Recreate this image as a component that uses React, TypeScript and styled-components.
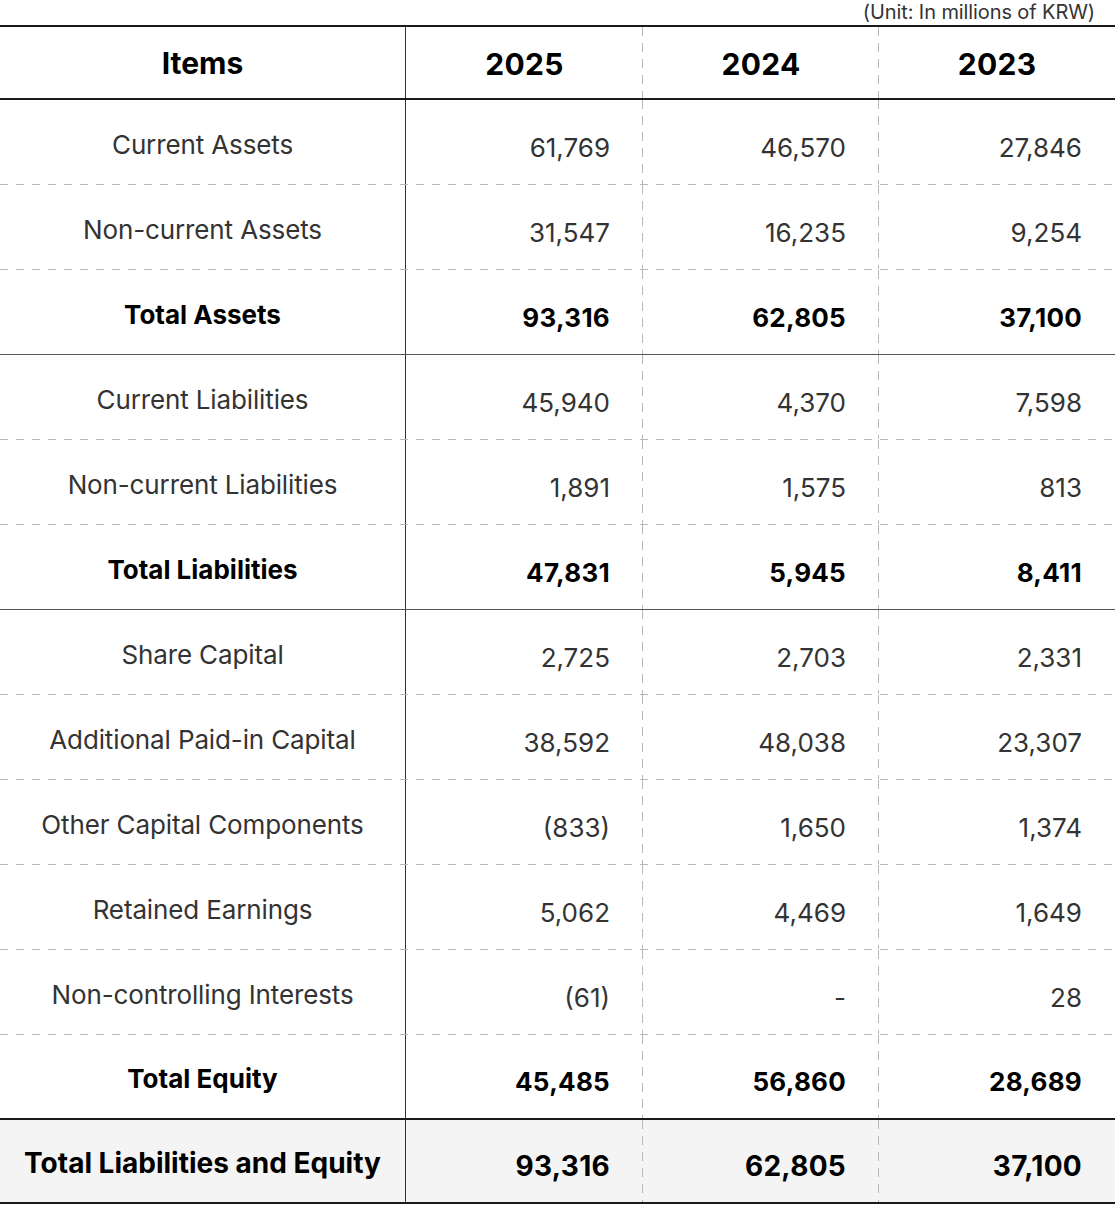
import React from 'react'
import styled, { createGlobalStyle, css } from 'styled-components'

const GlobalStyle = createGlobalStyle`
  html, body {
    margin: 0;
    padding: 0;
    background: #fff;
  }
  body {
    font-family: Inter, "Noto Sans", "Liberation Sans", sans-serif;
    color: #333;
  }
`

type LineKind = 'dashed' | 'solid' | 'thick' | 'none'

const DASH_COLOR = '#b8b8b8'

const Wrapper = styled.div`
  width: 1115px;
`

const UnitNote = styled.div`
  height: 25px;
  padding-right: 20px;
  text-align: right;
  font-size: 20px;
  line-height: 24px;
  color: #333;
  letter-spacing: -0.005em;
`

const Table = styled.div`
  border-top: 2px solid #1a1a1a;
  border-bottom: 2px solid #1a1a1a;
`

const Row = styled.div<{ $line: LineKind; $shaded?: boolean; $height?: number }>`
  display: grid;
  grid-template-columns: 406px 237px 236px 236px;
  box-sizing: border-box;
  height: ${({ $height }) => $height ?? 85}px;
  background-color: ${({ $shaded }) => ($shaded ? '#f4f4f4' : 'transparent')};

  ${({ $line }) =>
    $line === 'dashed' &&
    css`
      border-bottom: 1px solid transparent;
      background-origin: border-box;
      background-image: linear-gradient(to right, ${DASH_COLOR} 8px, transparent 8px);
      background-size: 16px 1px;
      background-repeat: repeat-x;
      background-position: left bottom;
    `}
  ${({ $line }) =>
    $line === 'solid' &&
    css`
      border-bottom: 1px solid #555;
    `}
  ${({ $line }) =>
    $line === 'thick' &&
    css`
      border-bottom: 2px solid #1a1a1a;
    `}
`

const LabelCell = styled.div<{ $bold?: boolean; $size: number; $shift: number }>`
  box-sizing: border-box;
  border-right: 1px solid #333;
  display: flex;
  align-items: center;
  justify-content: center;
  padding-top: ${({ $shift }) => $shift}px;
  font-size: ${({ $size }) => $size}px;
  font-weight: ${({ $bold }) => ($bold ? 700 : 400)};
  color: ${({ $bold }) => ($bold ? '#000' : '#333')};
  letter-spacing: ${({ $bold }) => ($bold ? '0' : '-0.005em')};
`

const ValueCell = styled.div<{
  $bold?: boolean
  $head?: boolean
  $last?: boolean
  $size: number
  $shift: number
}>`
  box-sizing: border-box;
  display: flex;
  align-items: center;
  justify-content: ${({ $head }) => ($head ? 'center' : 'flex-end')};
  padding-right: ${({ $head }) => ($head ? '0' : '33px')};
  padding-top: ${({ $shift }) => $shift}px;
  font-size: ${({ $size }) => $size}px;
  font-weight: ${({ $bold }) => ($bold ? 700 : 400)};
  color: ${({ $bold }) => ($bold ? '#000' : '#333')};
  letter-spacing: ${({ $head, $bold }) => ($head ? '0.01em' : $bold ? '0.01em' : '0')};
  ${({ $last }) =>
    !$last &&
    css`
      background-image: linear-gradient(to bottom, ${DASH_COLOR} 9px, transparent 9px);
      background-size: 1px 16px;
      background-repeat: repeat-y;
      background-position: right top;
    `}
`

type Item = {
  label: string
  values: [string, string, string]
  bold?: boolean
  line: LineKind
  grand?: boolean
}

const years = ['2025', '2024', '2023']

const items: Item[] = [
  { label: 'Current Assets', values: ['61,769', '46,570', '27,846'], line: 'dashed' },
  { label: 'Non-current Assets', values: ['31,547', '16,235', '9,254'], line: 'dashed' },
  { label: 'Total Assets', values: ['93,316', '62,805', '37,100'], bold: true, line: 'solid' },
  { label: 'Current Liabilities', values: ['45,940', '4,370', '7,598'], line: 'dashed' },
  { label: 'Non-current Liabilities', values: ['1,891', '1,575', '813'], line: 'dashed' },
  { label: 'Total Liabilities', values: ['47,831', '5,945', '8,411'], bold: true, line: 'solid' },
  { label: 'Share Capital', values: ['2,725', '2,703', '2,331'], line: 'dashed' },
  { label: 'Additional Paid-in Capital', values: ['38,592', '48,038', '23,307'], line: 'dashed' },
  { label: 'Other Capital Components', values: ['(833)', '1,650', '1,374'], line: 'dashed' },
  { label: 'Retained Earnings', values: ['5,062', '4,469', '1,649'], line: 'dashed' },
  { label: 'Non-controlling Interests', values: ['(61)', '-', '28'], line: 'dashed' },
  { label: 'Total Equity', values: ['45,485', '56,860', '28,689'], bold: true, line: 'thick' },
  {
    label: 'Total Liabilities and Equity',
    values: ['93,316', '62,805', '37,100'],
    bold: true,
    line: 'none',
    grand: true,
  },
]

export default function App() {
  return (
    <Wrapper>
      <GlobalStyle />
      <UnitNote>(Unit: In millions of KRW)</UnitNote>
      <Table>
        <Row $line="thick" $height={73}>
          <LabelCell $bold $size={30} $shift={0}>
            Items
          </LabelCell>
          {years.map((y, i) => (
            <ValueCell key={y} $head $bold $last={i === years.length - 1} $size={30} $shift={2}>
              {y}
            </ValueCell>
          ))}
        </Row>
        {items.map((item) => {
          const size = item.grand ? 28 : 26
          return (
            <Row
              key={item.label}
              $line={item.line}
              $shaded={item.grand}
              $height={item.grand ? 82 : 85}
            >
              <LabelCell $bold={item.bold} $size={size} $shift={4}>
                {item.label}
              </LabelCell>
              {item.values.map((v, i) => (
                <ValueCell key={i} $bold={item.bold} $last={i === 2} $size={size} $shift={item.grand ? 9 : 10}>
                  {v}
                </ValueCell>
              ))}
            </Row>
          )
        })}
      </Table>
    </Wrapper>
  )
}
